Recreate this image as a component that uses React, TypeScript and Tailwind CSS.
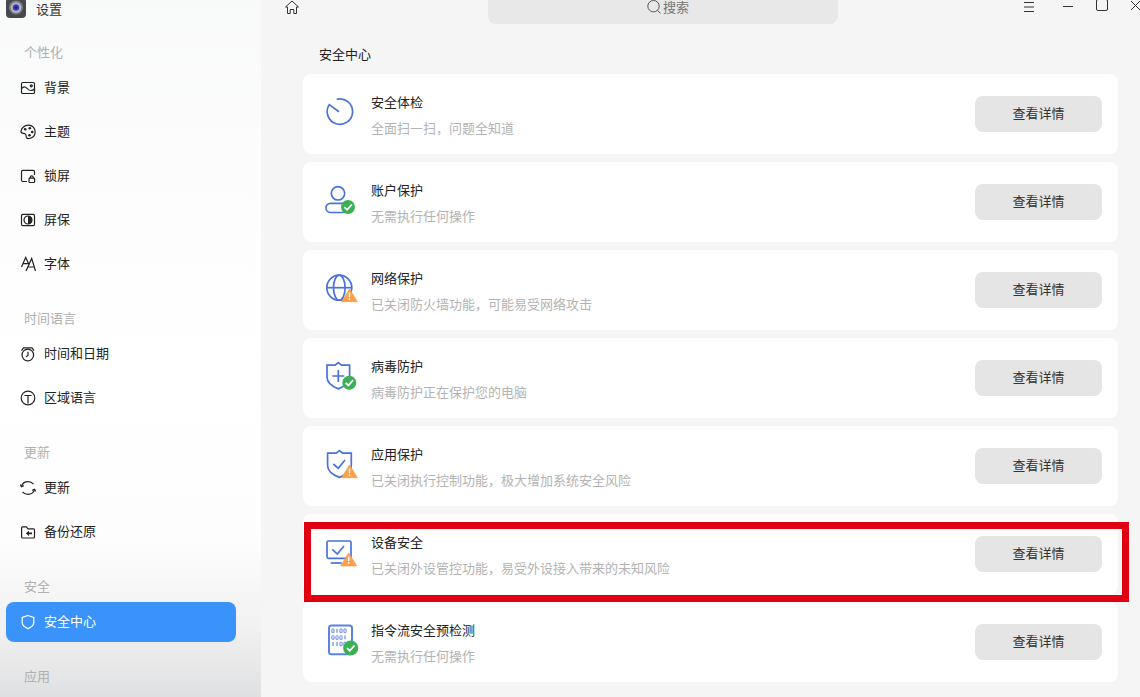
import React from "react";

const B = "#4a72dc";
const O = "#f9a04b";
const G = "#3cb054";

function Check({ cx, cy, r = 7 }: { cx: number; cy: number; r?: number }) {
  return (
    <g>
      <circle cx={cx} cy={cy} r={r} fill={G} />
      <path d={`M${cx - 3.6} ${cy + 0.1}L${cx - 0.9} ${cy + 2.8}L${cx + 3.8} ${cy - 2.5}`} fill="none" stroke="#fff" strokeWidth="1.8" />
    </g>
  );
}
function Warn({ x, y = 0, w = 15.6, h = 12.7 }: { x: number; y?: number; w?: number; h?: number }) {
  const m = x + w / 2;
  return (
    <g>
      <path d={`M${m} ${y}L${x + w} ${y + h}L${x} ${y + h}Z`} fill={O} stroke={O} strokeWidth="0.8" strokeLinejoin="round" />
      <path d={`M${m} ${y + 3.6}V${y + 8}`} stroke="#fff" strokeWidth="1.4" />
      <circle cx={m} cy={y + 10} r="0.85" fill="#fff" />
    </g>
  );
}
const S = { fill: "none", stroke: B, strokeWidth: 1.7 } as const;

const cardIcons: React.ReactNode[] = [
  <path key="a" {...S} d="M12.7 3.3A12.7 12.7 0 1 1 5.3 8.6L15 15.7" />,
  <g key="b">
    <circle cx="14" cy="9.3" r="6.7" {...S} />
    <rect x="2" y="19.3" width="21" height="9.2" rx="4.6" {...S} />
    <Check cx={24} cy={23} />
  </g>,
  <g key="c">
    <circle cx="15.3" cy="15.7" r="12.5" {...S} />
    <ellipse cx="15.3" cy="15.7" rx="5.8" ry="12.5" {...S} />
    <path {...S} d="M3 15.7H28" />
    <Warn x={17.7} y={17} />
  </g>,
  <g key="d">
    <path {...S} d="M14.3 2.6L17.5 5.2H25.6V17C25.6 22.5 20 26.6 14.3 28.9C8.6 26.6 3 22.5 3 17V5.2H11.1Z" />
    <path {...S} d="M8.3 16H20.3M14.3 10V22" />
    <Check cx={25.3} cy={22.7} />
  </g>,
  <g key="e">
    <path {...S} d="M15.5 2.6L18.8 5.2H27.3V17.5C27.3 23 21.5 27.2 15.5 29.4C9.5 27.2 3.6 23 3.6 17.5V5.2H12.2Z" />
    <path {...S} d="M9.3 16L14.3 20.3L21 12" />
    <Warn x={17.7} y={17} />
  </g>,
  <g key="f">
    <rect x="3" y="5" width="24" height="17.3" rx="1.5" {...S} />
    <path {...S} d="M6.7 27H17.7" />
    <path {...S} d="M8.3 13.3L13.3 18L20 10" />
    <Warn x={16.7} y={16.9} w={16} h={13} />
  </g>,
  <g key="g">
    <rect x="5" y="1.6" width="23" height="28.6" rx="2.5" fill="none" stroke="#5b83e6" strokeWidth="2" />
    {[6.8, 13.4, 20].map((y, r) =>
      [9, 13, 17, 21].map((x, c) =>
        (r === 0 ? c === 1 : r === 1 ? c === 3 : c < 2) ? (
          <path key={`${r}${c}`} d={`M${x} ${y - 1.9}V${y + 1.9}`} stroke="#7f9ae6" strokeWidth="1.4" />
        ) : (
          <ellipse key={`${r}${c}`} cx={x} cy={y} rx="1.2" ry="1.9" fill="none" stroke="#7f9ae6" strokeWidth="1.2" />
        ),
      ),
    )}
    <Check cx={26.7} cy={24} r={7.6} />
  </g>,
];

const ss = { fill: "none", stroke: "currentColor", strokeWidth: 1.2 } as const;
const sideIcons: Record<string, React.ReactNode> = {
  bg: (
    <g {...ss}>
      <rect x="1.5" y="2.5" width="13" height="11" rx="1.3" />
      <path d="M1.5 8.7C3.5 6.3 5 6.3 7 8.3S11 12 14.5 9" />
      <circle cx="11.3" cy="5.8" r="1" />
    </g>
  ),
  theme: (
    <g>
      <path {...ss} d="M8.5 1.2C4 1.2 1.2 4.4 1 7.5C1 9.6 3.5 9.2 5 9.8C6.6 10.5 5.8 12 6.4 13.2C7 14.8 8.8 14.9 10.4 14.3C13.2 13.2 15.2 11 15.2 8C15.2 4.2 12.4 1.2 8.5 1.2Z" />
      <circle cx="5.2" cy="5.3" r="1.3" fill="currentColor" />
      <circle cx="9.8" cy="4.3" r="1.3" fill="currentColor" />
      <circle cx="12.2" cy="8" r="1.3" fill="currentColor" />
      <circle cx="9.5" cy="11.3" r="1.3" fill="currentColor" />
    </g>
  ),
  lock: (
    <g {...ss}>
      <path d="M7 13.5H3C2 13.5 1.5 13 1.5 12V3.8C1.5 2.8 2 2.3 3 2.3H13C14 2.3 14.5 2.8 14.5 3.8V7" />
      <rect x="9" y="10.2" width="5.6" height="4.3" rx="0.8" />
      <path d="M10.3 10.2V9.2C10.3 7.4 13.2 7.4 13.2 9.2V10.2" />
    </g>
  ),
  saver: (
    <g>
      <rect {...ss} x="1.5" y="2.3" width="13" height="11.4" rx="1.5" />
      <circle {...ss} cx="8" cy="8" r="4" />
      <path d="M8 4A4 4 0 0 1 8 12Z" fill="currentColor" />
    </g>
  ),
  font: (
    <g {...ss}>
      <path d="M1.5 11L5.7 1.5L9 8.5M3.2 7.6H8" />
      <path d="M6 15L11.7 2.5L15.5 15M7.8 11H14.2" />
    </g>
  ),
  clock: (
    <g {...ss}>
      <circle cx="7.8" cy="9" r="5.8" />
      <path d="M8 5.8V9.4L6 10.8" />
      <path d="M1.5 4.6L3.5 1.8H12L14 4.6" />
    </g>
  ),
  lang: (
    <g {...ss}>
      <circle cx="8" cy="8" r="6.8" />
      <path d="M4.4 5.5H11.6M8 5.5V13.5" />
    </g>
  ),
  update: (
    <g {...ss}>
      <path d="M1.5 6.6C2.3 3.4 5 1.6 8 1.6C10.2 1.6 12.2 2.6 13.5 4.2" />
      <path d="M14.5 9.4C13.7 12.6 11 14.4 8 14.4C5.8 14.4 3.8 13.4 2.5 11.8" />
      <path d="M0.4 4.6L1.5 6.8L3.8 5.6M15.6 11.4L14.5 9.2L12.2 10.4" />
    </g>
  ),
  backup: (
    <g>
      <path {...ss} d="M1.6 3.8C1.6 3.2 2.1 2.8 2.6 2.8H6.4L8 4.8H13.5C14 4.8 14.5 5.2 14.5 5.8V13C14.5 13.6 14 14 13.5 14H2.6C2.1 14 1.6 13.6 1.6 13Z" />
      <path d="M12 8.4H9V6.7L5.8 9.3L9 11.9V10.2H12Z" fill="currentColor" />
    </g>
  ),
  shield: <path {...ss} d="M8 1.5L13.8 3.4V8.5C13.8 11.2 10.8 13.4 8 14.7C5.2 13.4 2.2 11.2 2.2 8.5V3.4Z" />,
};

const nav = [
  { t: "个性化", items: [["背景", "bg"], ["主题", "theme"], ["锁屏", "lock"], ["屏保", "saver"], ["字体", "font"]] },
  { t: "时间语言", items: [["时间和日期", "clock"], ["区域语言", "lang"]] },
  { t: "更新", items: [["更新", "update"], ["备份还原", "backup"]] },
  { t: "安全", items: [["安全中心", "shield"]] },
  { t: "应用", items: [] },
];

const cards = [
  ["安全体检", "全面扫一扫，问题全知道"],
  ["账户保护", "无需执行任何操作"],
  ["网络保护", "已关闭防火墙功能，可能易受网络攻击"],
  ["病毒防护", "病毒防护正在保护您的电脑"],
  ["应用保护", "已关闭执行控制功能，极大增加系统安全风险"],
  ["设备安全", "已关闭外设管控功能，易受外设接入带来的未知风险"],
  ["指令流安全预检测", "无需执行任何操作"],
];

export default function App() {
  return (
    <div className="relative flex h-[697px] w-[1140px] overflow-hidden bg-[#f5f5f5] text-[13px] leading-5 text-[#222] font-['Noto_Sans_CJK_SC','Noto_Sans',sans-serif]">
      <aside className="flex w-[261px] shrink-0 flex-col gap-5 bg-[linear-gradient(180deg,#f8f9f9_0%,#fcfcfd_20%,#ffffff_55%,#fdfdfd_78%,#f1f1f2_90%,#dfe0e1_100%)]">
        <div className="flex h-[18px] items-center gap-[10px] pl-[6px]">
          <svg width="20" height="20" viewBox="0 0 20 20" className="shrink-0 -translate-y-[1px]">
            <rect width="20" height="20" rx="4" fill="#45484c" />
            <circle cx="10" cy="9.5" r="7" fill="#7b7e82" />
            <circle cx="10" cy="9.5" r="5.2" fill="#b4b7bb" />
            <circle cx="10" cy="9.5" r="3.2" fill="#3a3dc4" />
            <circle cx="10" cy="9.5" r="1.2" fill="#101c60" />
          </svg>
          <span className="leading-4 text-[#333]">设置</span>
        </div>
        {nav.map((s) => (
          <div key={s.t} className="flex flex-col">
            <div className="flex h-[30px] items-center pl-6 text-[#b0b0b0]">
              <span className="-translate-y-px">{s.t}</span>
            </div>
            <div className="flex flex-col gap-1">
              {s.items.map(([label, ic]) => {
                const active = ic === "shield";
                return (
                  <div
                    key={ic}
                    className={
                      active
                        ? "mx-[6px] flex h-10 w-[230px] items-center gap-2 rounded-lg bg-[#3a92fb] pl-[14px] text-white"
                        : "mx-[6px] flex h-10 w-[230px] items-center gap-2 rounded-lg pl-[14px] text-[#222]"
                    }
                  >
                    <svg width="16" height="16" viewBox="0 0 16 16" className="shrink-0">
                      {sideIcons[ic]}
                    </svg>
                    <span className="-translate-y-px">{label}</span>
                  </div>
                );
              })}
            </div>
          </div>
        ))}
      </aside>

      <main className="flex min-w-0 flex-1 flex-col">
        <header className="flex h-6 shrink-0 items-start">
          <svg width="16" height="16" viewBox="0 0 16 16" className="ml-[23px] shrink-0 text-[#333]" fill="none" stroke="currentColor">
            <path d="M1.5 7L8 1L14.5 7H12.5V13.5H9.8V9.5H6.2V13.5H3.5V7Z" strokeLinejoin="round" />
          </svg>
          <div className="ml-[188px] flex h-6 w-[350px] items-start justify-center gap-[2px] rounded-b-lg bg-[#e8e8e8] pl-[10px] text-[#777]">
            <svg width="14" height="14" viewBox="0 0 14 14" fill="none" stroke="#555" className="shrink-0">
              <circle cx="6.5" cy="6.2" r="5.7" />
              <path d="M10.5 10.3L13.5 13.5" />
            </svg>
            <span className="leading-[13px]">搜索</span>
          </div>
          <div className="ml-auto flex items-start text-[#333]">
            <svg width="12" height="12" viewBox="0 0 12 12" stroke="currentColor" className="mt-px -translate-x-[5px]">
              <path d="M1 1.5H11M1 6H11M1 10.5H11" />
            </svg>
            <svg width="12" height="12" viewBox="0 0 12 12" stroke="currentColor" className="mt-px ml-[22px]">
              <path d="M1 5.5H11" />
            </svg>
            <svg width="14" height="14" viewBox="0 0 14 14" fill="none" stroke="currentColor" className="-mt-[2px] ml-[21px]">
              <rect x="1.5" y="1.5" width="11" height="11" rx="1.5" />
            </svg>
            <svg width="10" height="12" viewBox="0 0 10 12" stroke="currentColor" className="ml-[21px]">
              <path d="M1 1L10 10M10 1L1 10" />
            </svg>
          </div>
        </header>
        <h1 className="mt-5 mb-[10px] h-5 pl-[58px] font-normal text-[#222]">安全中心</h1>
        <div className="ml-[42px] flex w-[815px] flex-col gap-2">
          {cards.map(([title, sub], i) => (
            <div key={title} className="flex h-20 items-center rounded-lg bg-white pr-4 pl-[21px]">
              <svg width="36" height="36" viewBox="0 0 36 36" className="shrink-0">
                {cardIcons[i]}
              </svg>
              <div className="ml-[11px] flex flex-col gap-[6px] pt-[2px]">
                <div className="text-[#222]">{title}</div>
                <div className="text-[#b3b3b3]">{sub}</div>
              </div>
              <button className="ml-auto h-9 w-[127px] rounded-lg bg-[#e5e5e5] pb-[2px] text-[13px] text-[#333]">查看详情</button>
            </div>
          ))}
        </div>
      </main>

      <div className="pointer-events-none absolute top-[522px] left-[304px] h-[80px] w-[825px] border-[7px] border-[#e00012]" />
    </div>
  );
}
